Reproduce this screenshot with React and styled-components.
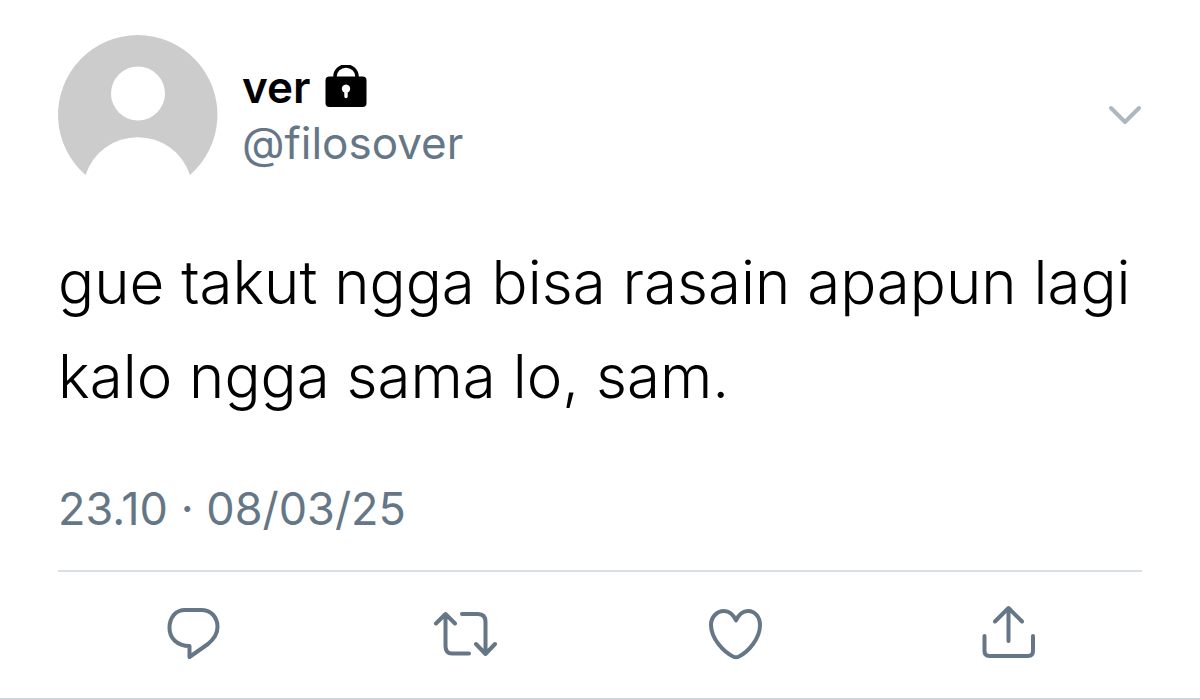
import React from 'react';
import styled, { createGlobalStyle } from 'styled-components';

const GlobalStyle = createGlobalStyle`
  * {
    box-sizing: border-box;
  }

  body {
    margin: 0;
    background: #ffffff;
    font-family: Inter, 'Liberation Sans', sans-serif;
  }
`;

const Tweet = styled.article`
  padding: 35px 58px;
  border-bottom: 1px solid #ccd6dd;
  background: #ffffff;
  color: #000000;
`;

const Header = styled.header`
  display: flex;
  align-items: center;
  gap: 24px;
`;

const Avatar = styled.svg`
  flex: none;
  width: 160px;
  height: 160px;
`;

const Author = styled.div`
  flex: 1;
  display: flex;
  flex-direction: column;
`;

const NameRow = styled.div`
  display: flex;
  align-items: center;
  gap: 14px;
`;

const Name = styled.strong`
  font-size: 44px;
  line-height: 56px;
  font-weight: 600;
`;

const LockIcon = styled.svg`
  width: 42px;
  height: 44px;
`;

const Handle = styled.a`
  font-size: 44px;
  line-height: 56px;
  color: #657786;
  text-decoration: none;
`;

const IconButton = styled.button`
  display: flex;
  justify-content: center;
  padding: 0;
  border: none;
  background: none;
  color: ${props => props.$color || '#657786'};
  cursor: pointer;
`;

const Icon = styled.svg`
  width: ${props => props.$width}px;
  height: ${props => props.$height}px;
  fill: none;
  stroke: currentColor;
  stroke-width: 4;
  stroke-linecap: round;
  stroke-linejoin: round;
`;

const Text = styled.p`
  margin: 40px 0 0;
  font-size: 60px;
  line-height: 94px;
  font-weight: 300;
`;

const Timestamp = styled.time`
  display: block;
  margin-top: 58px;
  padding-bottom: 33px;
  border-bottom: 2px solid #dadfe4;
  font-size: 45px;
  line-height: 56px;
  color: #657786;
`;

const Actions = styled.div`
  display: grid;
  grid-template-columns: repeat(4, 1fr);
  padding-top: 31px;
`;

const actions = [
  {
    label: 'Reply',
    path: 'M23 7H39C49 7 55.500 14 55.500 24C55.500 31 52 36 46 41L27.500 54V43C15 43 7.500 35 7.500 25C7.500 14 14 7 23 7Z',
  },
  {
    label: 'Retweet',
    path: 'M3 20.500L12.500 11L22 20.500M12.500 12V43Q12.500 50.500 19 50.500H36M29 11H45Q52.500 11 52.500 19V51M43 41L52.500 51L62 41',
  },
  {
    label: 'Like',
    path: 'M32 17.500C29 11 25 8 20 8C13 8 7 14 7 22C7 36 20 49 29 53.500Q32 55 35 53.500C44 49 56 36 56 22C56 14 51 8 44 8C39 8 35 11 32 17.500Z',
  },
  {
    label: 'Share',
    path: 'M20 18.500L33.500 5L47 18.500M33.500 6V38M9.500 33V48Q9.500 53 14.500 53H53Q58 53 58 48V33',
  },
];

const App = () => {
  return (
    <>
      <GlobalStyle />
      <Tweet>
        <Header>
          <Avatar viewBox="0 0 160 160" aria-hidden="true">
            <path fill="#cccccc" d="M27.500 140A79.700 79.700 0 1 1 132 140A55 55 0 0 0 27.500 140Z" />
            <circle cx="80" cy="58.500" r="27" fill="#ffffff" />
          </Avatar>
          <Author>
            <NameRow>
              <Name>ver</Name>
              <LockIcon viewBox="0 0 42 44" role="img" aria-label="Protected account">
                <path d="M10 13V11.500A11 10.500 0 0 1 32 11.500V13" fill="none" stroke="#000000" strokeWidth="3.500" />
                <rect x="0.500" y="11.500" width="41" height="30.500" rx="4" />
                <path d="M19.300 27.500A4.200 4.200 0 1 1 22.700 27.500V31.500A1.700 1.700 0 0 1 19.300 31.500Z" fill="#ffffff" />
              </LockIcon>
            </NameRow>
            <Handle href="#filosover">@filosover</Handle>
          </Author>
          <IconButton $color="#aab8c2" aria-label="More options">
            <Icon $width={34} $height={20} viewBox="0 0 34 20">
              <path d="M3 3L17 17L31 3" />
            </Icon>
          </IconButton>
        </Header>
        <Text>gue takut ngga bisa rasain apapun lagi kalo ngga sama lo, sam.</Text>
        <Timestamp dateTime="2025-03-08T23:10">23.10 · 08/03/25</Timestamp>
        <Actions>
          {actions.map(action => (
            <IconButton key={action.label} aria-label={action.label}>
              <Icon $width={64} $height={60} viewBox="0 0 64 60">
                <path d={action.path} />
              </Icon>
            </IconButton>
          ))}
        </Actions>
      </Tweet>
    </>
  );
};

export default App;
